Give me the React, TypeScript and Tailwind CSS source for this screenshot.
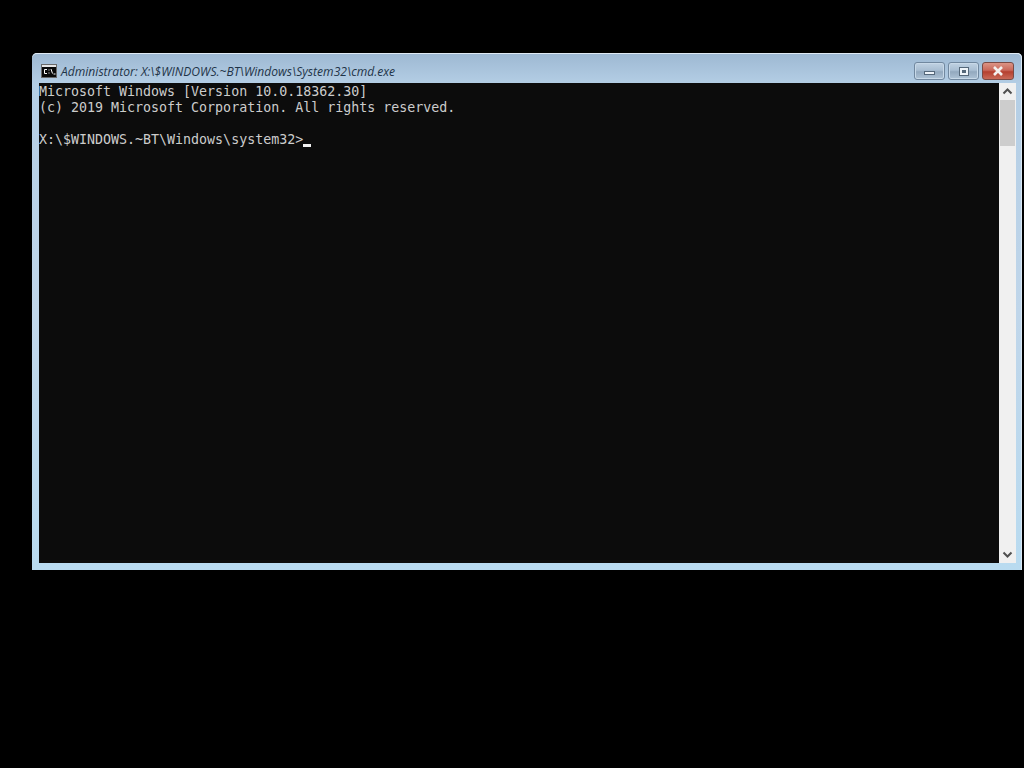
export default function App() {
  return (
    <div className="h-[768px] w-[1024px] overflow-hidden bg-black pl-[32px] pt-[53px]">
      <div className="flex h-[517px] w-[990px] flex-col rounded-t-[5px] bg-[linear-gradient(180deg,#9db8d2_0%,#b4cee5_6%,#c0d6ea_50%,#b9dbf0_100%)] shadow-[inset_0_1px_0_#dfeaf4,inset_-1px_0_0_#dbe9f5]">
        <TitleBar />
        <div className="flex h-[480px] pl-[7px]">
          <div className="h-[480px] w-[960px] bg-[#0c0c0c] pt-px font-['DejaVu_Sans_Mono',monospace] text-[13.3px] leading-[16px] text-[#cccccc]">
            <div>Microsoft Windows [Version 10.0.18362.30]</div>
            <div>(c) 2019 Microsoft Corporation. All rights reserved.</div>
            <div className="h-4" />
            <div className="flex">
              <span>{"X:\\$WINDOWS.~BT\\Windows\\system32>"}</span>
              <span className="mt-[12px] h-[3px] w-2 bg-[#f2f2f2]" />
            </div>
          </div>
          <ScrollBar />
        </div>
      </div>
    </div>
  );
}

function TitleBar() {
  return (
    <div className="flex h-[30px] shrink-0 items-start pl-[9px] pr-[8px] pt-[10px]">
      <svg width="16" height="14" viewBox="0 0 16 14" className="mr-[4px] mt-[1px] shrink-0">
        <rect x="0.5" y="0.5" width="15" height="13" fill="#e6e6e6" stroke="#6a6a6a" />
        <rect x="1" y="3" width="14" height="10" fill="#0a0a0a" />
        <path d="M6 5.5H3.5V9.5H6M8 5.5v1M8 8.5v1M10 5l1.5 4.5M12.5 10h2" stroke="#ffffff" strokeWidth="1" fill="none" />
      </svg>
      <span className="mt-px whitespace-nowrap font-['Open_Sans',sans-serif] text-[12.1px] italic leading-[16px] text-[#1f3448]">
        {"Administrator: X:\\$WINDOWS.~BT\\Windows\\System32\\cmd.exe"}
      </span>
      <div className="ml-auto -mt-[1px] flex gap-[3px]">
        <button className="flex h-[18px] w-[31px] items-center justify-center rounded-[3px] border border-[#71889f] bg-[linear-gradient(180deg,#c0d2e3_0%,#a9bed2_45%,#93a9be_55%,#aec3d6_100%)] shadow-[inset_0_0_0_1px_#c8d9e8]">
          <span className="mt-[4px] h-[4px] w-[11px] border border-[#55687a] bg-[#eef4f9]" />
        </button>
        <button className="flex h-[18px] w-[31px] items-center justify-center rounded-[3px] border border-[#71889f] bg-[linear-gradient(180deg,#c0d2e3_0%,#a9bed2_45%,#93a9be_55%,#aec3d6_100%)] shadow-[inset_0_0_0_1px_#c8d9e8]">
          <span className="flex h-[9px] w-[10px] items-center justify-center border border-[#55687a] bg-[#eef4f9]">
            <span className="h-[3px] w-[4px] bg-[#55687a]" />
          </span>
        </button>
        <button className="flex h-[18px] w-[32px] items-center justify-center rounded-[3px] border border-[#7a4a44] bg-[linear-gradient(180deg,#dc9485_0%,#c9685a_45%,#b5402f_55%,#c96a58_100%)]">
          <svg width="12" height="10" viewBox="0 0 12 10">
            <path d="M2 1l8 8M10 1l-8 8" stroke="#f4f1ef" strokeWidth="2.6" />
          </svg>
        </button>
      </div>
    </div>
  );
}

function ScrollBar() {
  return (
    <div className="flex h-[480px] w-[17px] flex-col items-center bg-[#f0f0f0]">
      <svg width="17" height="17" viewBox="0 0 17 17" className="shrink-0">
        <path d="M4.5 10.5l4-4 4 4" stroke="#505050" strokeWidth="2" fill="none" />
      </svg>
      <div className="h-[46px] w-[17px] shrink-0 border-x border-[#f0f0f0] bg-[#cdcdcd]" />
      <div className="flex-1" />
      <svg width="17" height="17" viewBox="0 0 17 17" className="shrink-0">
        <path d="M4.5 6.5l4 4 4-4" stroke="#505050" strokeWidth="2" fill="none" />
      </svg>
    </div>
  );
}
